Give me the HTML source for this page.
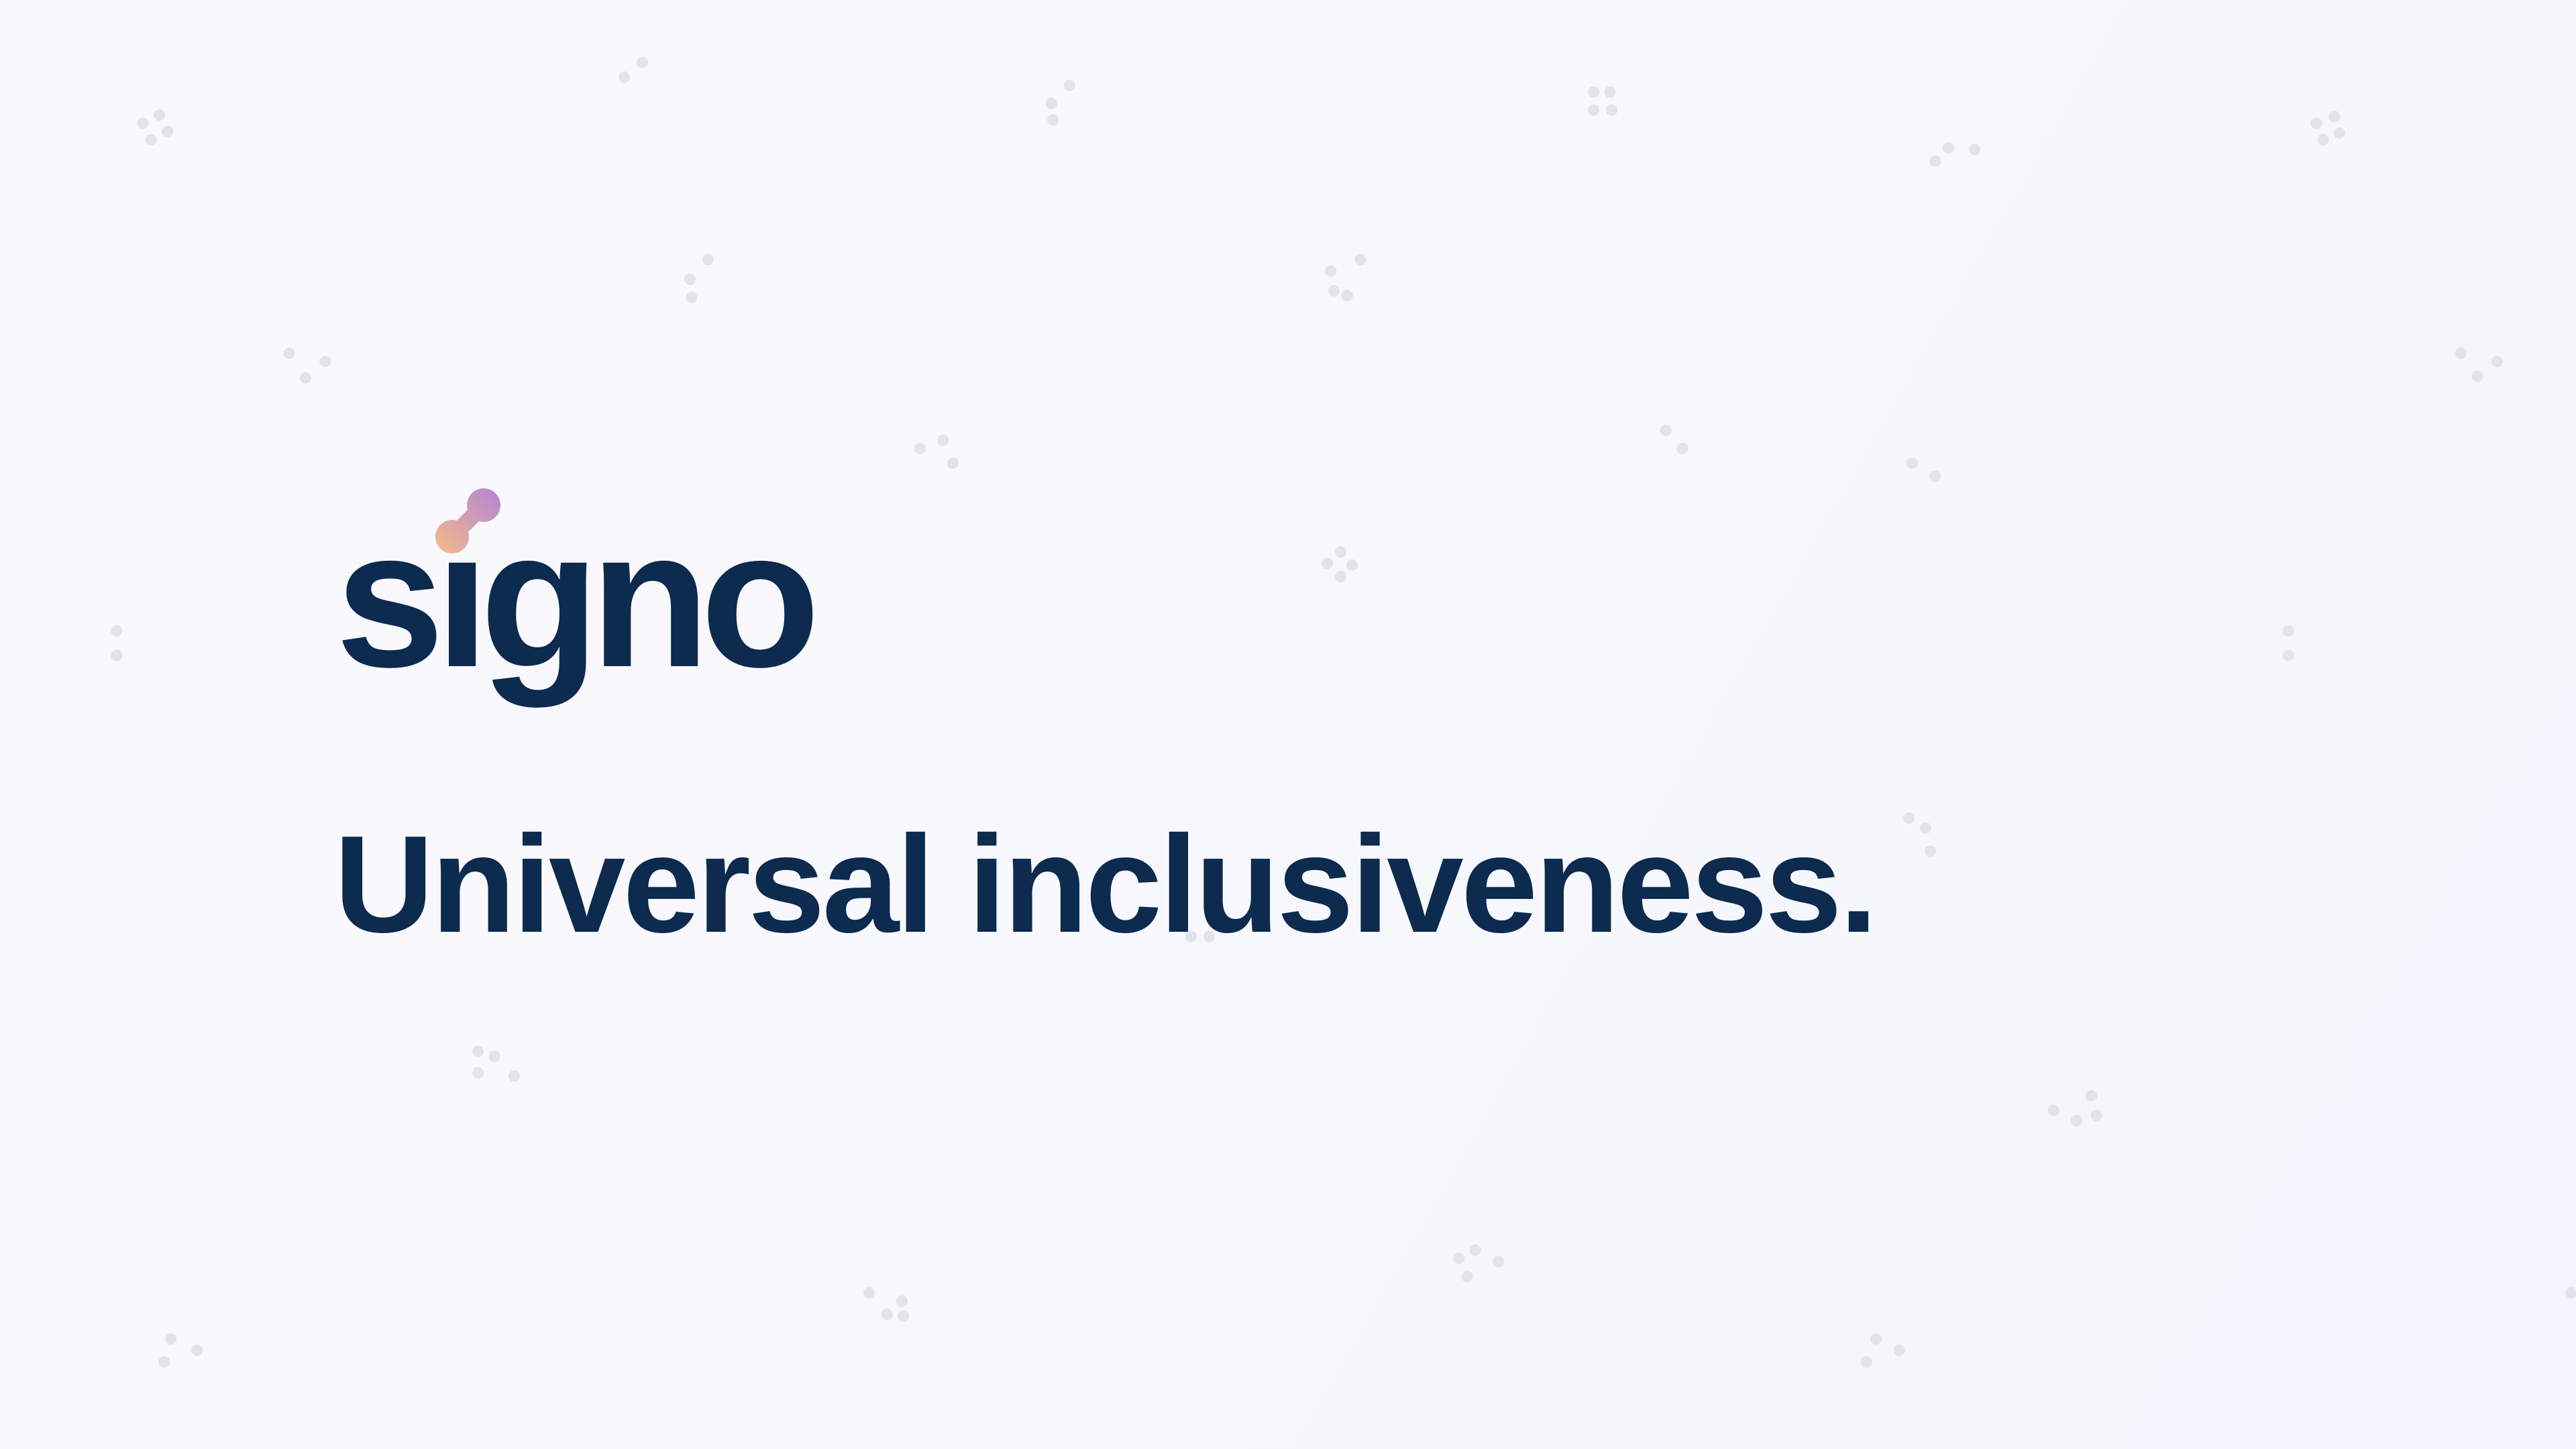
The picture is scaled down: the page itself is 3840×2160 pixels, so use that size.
<!DOCTYPE html>
<html><head><meta charset="utf-8">
<style>
html,body{margin:0;padding:0}
body{width:3840px;height:2160px;overflow:hidden;position:relative;
background:linear-gradient(120deg,#f9f9fd 0%,#f7f8fd 50%,#f2f5fc 100%);
font-family:"Liberation Sans",sans-serif;color:#0d2a4f}
#dots{position:absolute;left:0;top:0}
.logo{position:absolute;left:500px;top:746px;font-size:292px;font-weight:bold;letter-spacing:-14px;line-height:1;white-space:nowrap}
.tag{position:absolute;left:498px;top:1215px;font-size:206px;font-weight:bold;line-height:1;white-space:nowrap;letter-spacing:-4px}
#mark{position:absolute;left:0;top:0}
</style></head><body>
<svg id="dots" width="3840" height="2160" viewBox="0 0 1568 882">
<g fill="#e3e4eb">
<circle cx="87" cy="75" r="3.5"/><circle cx="97" cy="70" r="3.5"/><circle cx="102" cy="80" r="3.5"/><circle cx="92" cy="85" r="3.5"/>
<circle cx="380" cy="47" r="3.5"/><circle cx="391" cy="38" r="3.5"/>
<circle cx="640" cy="63" r="3.5"/><circle cx="641" cy="73" r="3.5"/><circle cx="651" cy="52" r="3.5"/>
<circle cx="970" cy="56" r="3.5"/><circle cx="980" cy="56" r="3.5"/><circle cx="970" cy="67" r="3.5"/><circle cx="981" cy="67" r="3.5"/>
<circle cx="1178" cy="98" r="3.5"/><circle cx="1186" cy="90" r="3.5"/><circle cx="1202" cy="91" r="3.5"/>
<circle cx="1410" cy="75" r="3.5"/><circle cx="1421" cy="71" r="3.5"/><circle cx="1424" cy="81" r="3.5"/><circle cx="1414" cy="85" r="3.5"/>
<circle cx="420" cy="170" r="3.5"/><circle cx="421" cy="181" r="3.5"/><circle cx="431" cy="158" r="3.5"/>
<circle cx="810" cy="165" r="3.5"/><circle cx="812" cy="177" r="3.5"/><circle cx="820" cy="180" r="3.5"/><circle cx="828" cy="158" r="3.5"/>
<circle cx="176" cy="215" r="3.5"/><circle cx="186" cy="230" r="3.5"/><circle cx="198" cy="220" r="3.5"/>
<circle cx="560" cy="273" r="3.5"/><circle cx="574" cy="268" r="3.5"/><circle cx="580" cy="282" r="3.5"/>
<circle cx="1014" cy="262" r="3.5"/><circle cx="1024" cy="273" r="3.5"/>
<circle cx="1164" cy="282" r="3.5"/><circle cx="1178" cy="290" r="3.5"/>
<circle cx="1498" cy="215" r="3.5"/><circle cx="1508" cy="229" r="3.5"/><circle cx="1520" cy="220" r="3.5"/>
<circle cx="71" cy="384" r="3.5"/><circle cx="71" cy="399" r="3.5"/>
<circle cx="808" cy="343" r="3.5"/><circle cx="816" cy="336" r="3.5"/><circle cx="823" cy="344" r="3.5"/><circle cx="816" cy="351" r="3.5"/>
<circle cx="1393" cy="384" r="3.5"/><circle cx="1393" cy="399" r="3.5"/>
<circle cx="1162" cy="498" r="3.5"/><circle cx="1172" cy="504" r="3.5"/><circle cx="1175" cy="518" r="3.5"/>
<circle cx="291" cy="640" r="3.5"/><circle cx="301" cy="643" r="3.5"/><circle cx="291" cy="653" r="3.5"/><circle cx="313" cy="655" r="3.5"/>
<circle cx="725" cy="570" r="3.5"/><circle cx="736" cy="570" r="3.5"/>
<circle cx="1250" cy="676" r="3.5"/><circle cx="1264" cy="682" r="3.5"/><circle cx="1273" cy="667" r="3.5"/><circle cx="1276" cy="679" r="3.5"/>
<circle cx="888" cy="766" r="3.5"/><circle cx="898" cy="761" r="3.5"/><circle cx="912" cy="768" r="3.5"/><circle cx="893" cy="777" r="3.5"/>
<circle cx="529" cy="787" r="3.5"/><circle cx="540" cy="800" r="3.5"/><circle cx="549" cy="792" r="3.5"/><circle cx="550" cy="801" r="3.5"/>
<circle cx="104" cy="815" r="3.5"/><circle cx="100" cy="829" r="3.5"/><circle cx="120" cy="822" r="3.5"/>
<circle cx="1142" cy="815" r="3.5"/><circle cx="1156" cy="822" r="3.5"/><circle cx="1136" cy="829" r="3.5"/>
<circle cx="1565" cy="787" r="3.5"/>
</g></svg>
<div class="logo">sıgno</div>
<svg id="mark" width="3840" height="2160">
<defs><linearGradient id="g" x1="650" y1="825" x2="745" y2="730" gradientUnits="userSpaceOnUse">
<stop offset="0" stop-color="#f5bb87"/><stop offset="1" stop-color="#b285d6"/></linearGradient></defs>
<g fill="url(#g)">
<circle cx="721" cy="753" r="25"/>
<circle cx="674" cy="800" r="25"/>
<line x1="674" y1="800" x2="721" y2="753" stroke="url(#g)" stroke-width="24"/>
</g></svg>
<div class="tag">Universal inclusiveness.</div>
</body></html>
